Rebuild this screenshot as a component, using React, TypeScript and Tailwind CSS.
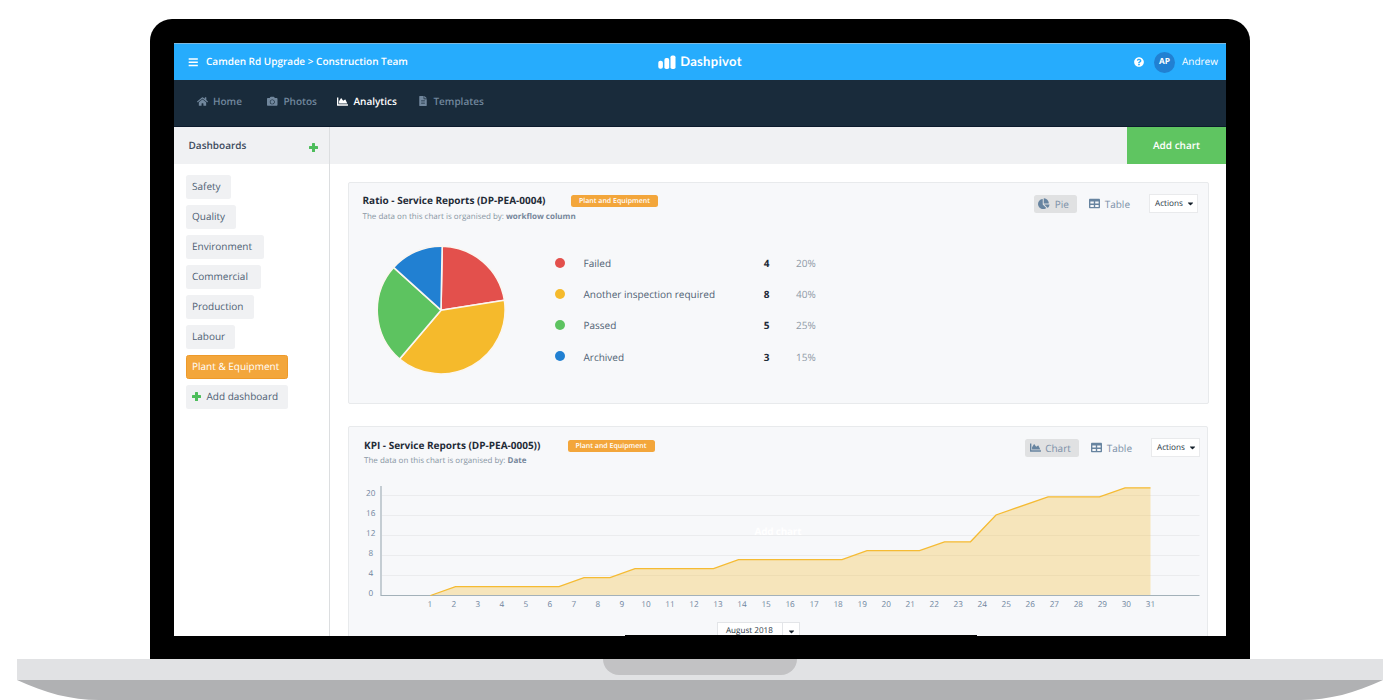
import type { ReactNode } from 'react';
import {
  FaBars,
  FaCamera,
  FaCaretDown,
  FaChartArea,
  FaChartPie,
  FaFileAlt,
  FaHome,
  FaQuestionCircle,
  FaTable,
} from 'react-icons/fa';

function Plus() {
  return (
    <svg className="size-[9px] shrink-0" viewBox="0 0 9 9" fill="#4dbd5b">
      <rect x="3" y="0" width="3" height="9" rx="0.5" />
      <rect x="0" y="3" width="9" height="3" rx="0.5" />
    </svg>
  );
}

function Logo() {
  return (
    <div className="flex items-center pb-px text-white">
      <svg className="mt-[2px] h-[14px] w-[18px]" viewBox="0 0 18 14" fill="currentColor">
        <rect x="0.3" y="5.8" width="4.6" height="8" rx="2" />
        <rect x="6.4" y="3.1" width="4.8" height="10.9" rx="1.8" />
        <rect x="12.5" y="0.5" width="5" height="13.5" rx="1.8" />
      </svg>
      <span className="ml-[4px] font-[Lato] text-[13px] font-bold leading-[14px] tracking-[0.3px]">Dashpivot</span>
    </div>
  );
}

function NavItem({ icon, label, active, className }: { icon: ReactNode; label: string; active?: boolean; className?: string }) {
  return (
    <div className={`flex items-center font-semibold ${active ? 'text-white' : 'text-[#71879d]'} ${className ?? ''}`}>
      {icon}
      <span>{label}</span>
    </div>
  );
}

const dashboards = [
  { label: 'Safety', width: 'w-[45px]' },
  { label: 'Quality', width: 'w-[50px]' },
  { label: 'Environment', width: 'w-[78px]' },
  { label: 'Commercial', width: 'w-[75px]' },
  { label: 'Production', width: 'w-[68px]' },
  { label: 'Labour', width: 'w-[49px]' },
];

function Sidebar() {
  return (
    <aside className="w-[156px] shrink-0 border-r border-[#dcdee0]">
      <div className="flex h-[37px] items-center justify-between bg-[#f0f1f3] pl-[14.5px] pr-[11.5px]">
        <span className="pb-[2px] font-semibold text-[#3c4a5c]">Dashboards</span>
        <div className="pt-[4px]">
          <Plus />
        </div>
      </div>
      <div className="flex flex-col items-start gap-[6px] pl-[11.5px] pt-[11px] text-[#4f5f73]">
        {dashboards.map((d) => (
          <div key={d.label} className={`flex h-6 items-center rounded-[2.5px] bg-[#f0f1f3] pb-[2px] pl-[6.5px] ${d.width}`}>
            {d.label}
          </div>
        ))}
        <div className="-mt-[0.5px] flex h-6 w-[102px] items-center rounded-[2.5px] border border-[#ee9a2a] bg-[#f3a63b] pb-[2px] pl-[5.5px] text-white">
          Plant &amp; Equipment
        </div>
        <div className="flex h-6 w-[102px] items-center rounded-[2.5px] bg-[#f0f1f3] pb-[2px] pl-[6px]">
          <div className="pt-[2px]">
            <Plus />
          </div>
          <span className="ml-[6px]">Add dashboard</span>
        </div>
      </div>
    </aside>
  );
}

function CardHeader({ title, groupedBy, titleClass, badgeClass, view, viewIcon, viewClass }: {
  title: string;
  groupedBy: string;
  titleClass: string;
  badgeClass: string;
  view: string;
  viewIcon: ReactNode;
  viewClass: string;
}) {
  return (
    <div className="flex justify-between">
      <div className="flex items-start">
        <div className={titleClass}>
          <div className="whitespace-nowrap font-bold leading-[14px] text-[#1f2b37]">{title}</div>
          <div className="whitespace-nowrap text-[8px] leading-[11px] text-[#8796a3]">
            The data on this chart is organised by: <b className="font-bold text-[#76879a]">{groupedBy}</b>
          </div>
        </div>
        <div className={`flex h-[12px] w-[87px] items-center justify-center rounded-[2.5px] bg-[#f3a63b] pt-px text-[7px] font-semibold leading-[11px] text-white ${badgeClass}`}>
          Plant and Equipment
        </div>
      </div>
      <div className="flex h-[19px] items-center text-[#7b90a8]">
        <div className={`flex h-[18px] items-center rounded-[2.5px] bg-[#e0e1e2] ${viewClass}`}>
          {viewIcon}
          <span>{view}</span>
        </div>
        <FaTable className="ml-[12px] size-[11px] text-[#6784a0]" />
        <span className="ml-[4.5px]">Table</span>
        <div className="ml-[19px] flex h-[19px] w-[49px] items-center border border-[#e9eaec] bg-white pl-[5px] text-[8.2px] text-[#2b3846]">
          Actions
          <FaCaretDown className="-mt-px ml-[3px] size-[9px] text-[#15202b]" />
        </div>
      </div>
    </div>
  );
}

const statuses = [
  { label: 'Failed', count: 4, share: '20%', dot: 'bg-[#e3504c]' },
  { label: 'Another inspection required', count: 8, share: '40%', dot: 'bg-[#f5ba2c]' },
  { label: 'Passed', count: 5, share: '25%', dot: 'bg-[#5dc360]' },
  { label: 'Archived', count: 3, share: '15%', dot: 'bg-[#2180d2]' },
];

function RatioCard() {
  return (
    <section className="h-[222px] w-[861px] rounded-[2px] border border-[#e8eaec] bg-[#f7f8fa] pl-[13.5px] pr-[10px] pt-[11px]">
      <div className="h-[52px]">
        <CardHeader
          title="Ratio - Service Reports (DP-PEA-0004)"
          groupedBy="workflow column"
          titleClass="-mt-px flex w-[208.5px] flex-col gap-[4px]"
          badgeClass="mt-[1.4px]"
          view="Pie"
          viewIcon={<FaChartPie className="mr-[5px] size-[11.5px] text-[#6784a0]" />}
          viewClass="w-[43px] pl-[4px]"
        />
      </div>
      <div className="flex pl-[13px]">
        <svg className="-mt-[1px] size-[130px]" viewBox="376 245 130 130" stroke="#fbf6f0" strokeWidth="1.6" strokeLinejoin="round">
          <path d="M441 310.2L442.2 246.2A64.3 64.3 0 0 1 504.4 300.2Z" fill="#e3504c" />
          <path d="M441 310.2L504.4 300.2A64.3 64.3 0 0 1 399.6 359Z" fill="#f5ba2c" />
          <path d="M441 310.2L399.6 359A64.3 64.3 0 0 1 393.6 267.4Z" fill="#5dc360" />
          <path d="M441 310.2L393.6 267.4A64.3 64.3 0 0 1 442.2 246.2Z" fill="#2180d2" />
        </svg>
        <div className="ml-[49.5px] pt-[1.5px]">
          {statuses.map((s) => (
            <div key={s.label} className="flex h-[31.2px] items-center text-[#4f5f73]">
              <span className={`-mt-px size-[10px] rounded-full ${s.dot}`} />
              <span className="ml-[18.5px] w-[173px]">{s.label}</span>
              <span className="w-[20px] text-center font-bold text-[#1f2b37]">{s.count}</span>
              <span className="ml-[19.5px] text-[#8f9ba7]">{s.share}</span>
            </div>
          ))}
        </div>
      </div>
    </section>
  );
}

const days = Array.from({ length: 31 }, (_, i) => i + 1);
const ticks = [20, 16, 12, 8, 4, 0];
const line =
  '430.5,595.5 455.5,586.6 559,586.6 584,577.6 610,577.6 635,568.7 713.5,568.7 738.5,559.7 842,559.7 867,550.7 919.5,550.7 944.5,541.8 970.5,541.8 996,515 1048,496.8 1099.5,496.8 1125,487.8 1150.5,487.8';

function KpiChart() {
  return (
    <svg className="block h-[132px] w-[840px] text-[8.2px]" viewBox="362 482 840 132">
      {ticks.slice(0, 5).map((t, i) => (
        <path key={t} d={`M382 ${495.5 + i * 20}H1199.5`} stroke="#ebecee" />
      ))}
      <polygon points={`${line} 1150.5,595.5`} fill="#f5ba2c" fillOpacity="0.3" />
      <path d="M381 486V596M380.5 595.5H1199.5" stroke="#a3b1b9" strokeWidth="1.2" fill="none" />
      <polyline points={line} fill="none" stroke="#f5bb33" strokeWidth="1.3" />
      {ticks.map((t, i) => (
        <text key={t} x="370.8" y={495.8 + i * 20} textAnchor="middle" fill="#6f849d">
          {t}
        </text>
      ))}
      {days.map((d) => (
        <text key={d} x={429.8 + (d - 1) * 24.02} y="607.4" textAnchor="middle" fill="#6f849d">
          {d}
        </text>
      ))}
      <text x="754.5" y="535" fill="#fff" fontSize="10" fontWeight="700" textLength="47">
        Add chart
      </text>
    </svg>
  );
}

function KpiCard() {
  return (
    <section className="mt-[22px] h-[260px] w-[860px] rounded-[2px] border border-[#e8eaec] bg-[#f7f8fa] pt-[11px]">
      <div className="h-[44px] pl-[15px] pr-[7px]">
        <CardHeader
          title="KPI - Service Reports (DP-PEA-0005))"
          groupedBy="Date"
          titleClass="flex w-[203.5px] flex-col gap-[3px]"
          badgeClass="mt-[2px]"
          view="Chart"
          viewIcon={<FaChartArea className="mr-[4.5px] size-[11px] text-[#6784a0]" />}
          viewClass="w-[54px] pl-[4.5px]"
        />
      </div>
      <div className="pl-[13px]">
        <KpiChart />
      </div>
      <div className="ml-[368px] mt-[8px] flex h-[19px] w-[83px] items-stretch border border-[#e3e5e8] bg-white text-[8.1px] text-[#2b3846]">
        <span className="w-[64px] pl-[8px] leading-[16px]">August 2018</span>
        <span className="flex flex-1 items-center justify-center border-l border-[#e3e5e8]">
          <FaCaretDown className="size-[9px] text-[#15202b]" />
        </span>
      </div>
    </section>
  );
}

function Screen() {
  return (
    <div className="flex h-[593px] flex-col overflow-hidden bg-white">
      <header className="grid h-[37px] shrink-0 grid-cols-3 items-center bg-[#26acfd] text-white shadow-[inset_0_1px_0_#7cb9e0]">
        <div className="flex items-center pl-[13.5px] font-semibold">
          <FaBars className="mt-px size-[10.5px]" />
          <span className="ml-[8px] pb-px">Camden Rd Upgrade &gt; Construction Team</span>
        </div>
        <div className="flex justify-center">
          <Logo />
        </div>
        <div className="flex items-center justify-end pr-[8px]">
          <FaQuestionCircle className="mt-px size-[10px]" />
          <span className="ml-[10px] mt-px flex size-[21px] items-center justify-center rounded-full bg-[#2180d2] text-[8.3px] font-bold">AP</span>
          <span className="ml-[7px] pb-px">Andrew</span>
        </div>
      </header>
      <nav className="flex h-[47px] shrink-0 items-center border-b border-[#0c1a2c] bg-[#192b3b] pb-[4px]">
        <NavItem className="ml-[23px]" icon={<FaHome className="mr-[5px] size-[11px]" />} label="Home" />
        <NavItem className="ml-[25.5px]" icon={<FaCamera className="mr-[5.5px] size-[10.5px]" />} label="Photos" />
        <NavItem className="ml-[20.5px]" icon={<FaChartArea className="mr-[5px] size-[11px]" />} label="Analytics" active />
        <NavItem className="ml-[21.5px]" icon={<FaFileAlt className="mr-[5px] size-[10px]" />} label="Templates" />
      </nav>
      <div className="flex flex-1">
        <Sidebar />
        <main className="flex-1">
          <div className="flex h-[37px] justify-end bg-[#f0f1f3]">
            <div className="flex w-[99px] items-center justify-center bg-[#5fc561] pb-[2px] font-semibold text-white">Add chart</div>
          </div>
          <div className="pl-[18px] pt-[18px]">
            <RatioCard />
            <KpiCard />
          </div>
        </main>
      </div>
    </div>
  );
}

export default function App() {
  return (
    <div className="flex h-[700px] w-[1400px] flex-col overflow-hidden bg-white pt-[19px] font-['Open_Sans',sans-serif] text-[10px] leading-[14px] [text-rendering:geometricPrecision]">
      <div className="relative ml-[150px] h-[640px] w-[1100px] shrink-0 rounded-t-[22px] bg-black px-6 pt-6">
        <Screen />
        <div className="absolute left-[475px] top-[616px] h-px w-[352px] bg-black" />
      </div>
      <div className="ml-[17px] flex h-[21px] w-[1366px] shrink-0 justify-center bg-[#e1e2e4]">
        <div className="h-[16px] w-[194px] rounded-b-[16px] bg-[#c2c2c4]" />
      </div>
      <svg className="ml-[17px] h-[20px] w-[1366px] shrink-0" viewBox="0 0 1366 20">
        <path d="M0 0H1366C1338 13 1312 20 1284 20H82C54 20 28 13 0 0Z" fill="#b0b1b3" />
      </svg>
    </div>
  );
}
